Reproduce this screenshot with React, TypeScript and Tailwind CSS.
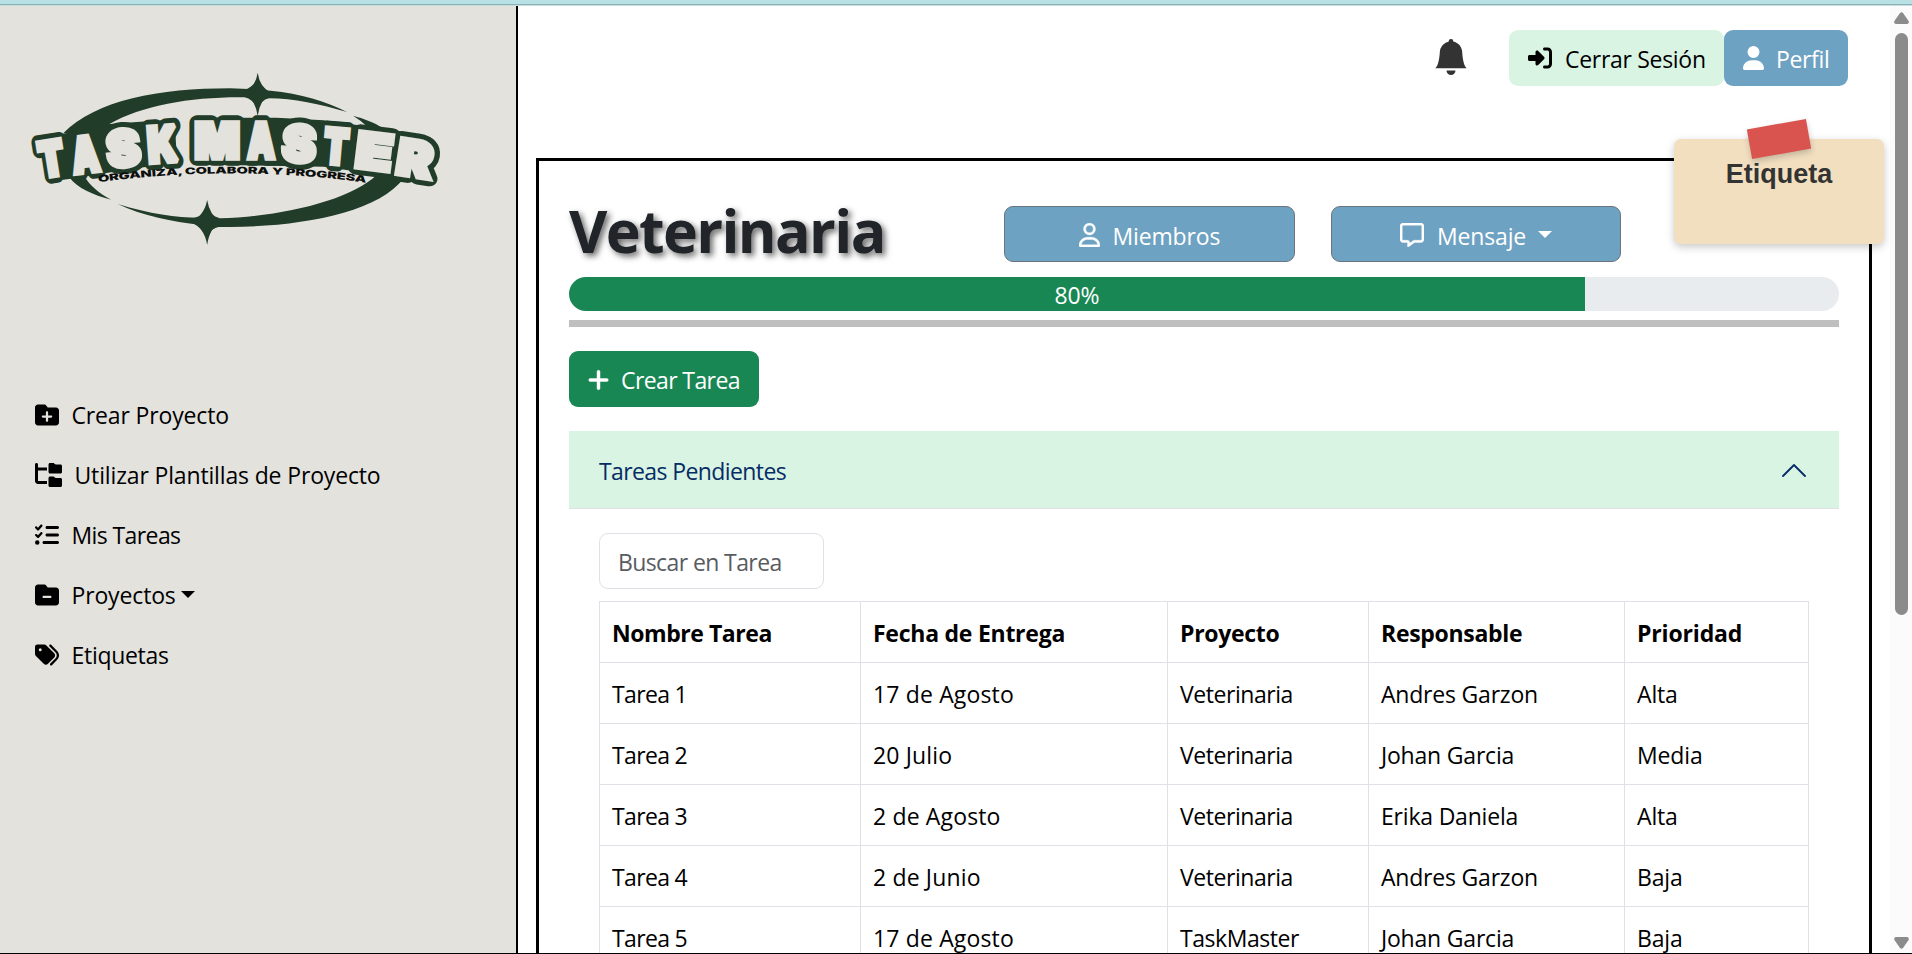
import type { ReactNode } from "react";
import {
  FaFolderMinus,
  FaFolderPlus,
  FaFolderTree,
  FaListCheck,
  FaPlus,
  FaRegMessage,
  FaRegUser,
  FaRightToBracket,
  FaTags,
  FaUser,
} from "react-icons/fa6";
import { BsBellFill } from "react-icons/bs";

type Letter = { ch: string; x: number; y: number; w: number; h: number; r: number };

const letters: Letter[] = [
  { ch: "T", x: 156, y: 325, w: 86, h: 122, r: -9 },
  { ch: "A", x: 258, y: 313, w: 92, h: 124, r: -7 },
  { ch: "S", x: 371, y: 294, w: 112, h: 126, r: -6 },
  { ch: "K", x: 488, y: 282, w: 100, h: 124, r: -4 },
  { ch: "M", x: 652, y: 273, w: 146, h: 122, r: 0 },
  { ch: "A", x: 783, y: 273, w: 92, h: 122, r: 0 },
  { ch: "S", x: 897, y: 281, w: 112, h: 126, r: 3 },
  { ch: "T", x: 1008, y: 289, w: 84, h: 122, r: 5 },
  { ch: "E", x: 1122, y: 304, w: 120, h: 124, r: 7 },
  { ch: "R", x: 1243, y: 326, w: 118, h: 124, r: 9 },
];

function LogoLetters({ className, strokeWidth }: { className: string; strokeWidth: number }) {
  return (
    <g className={className} strokeWidth={strokeWidth}>
      {letters.map((l, i) => (
        <text
          key={i}
          transform={`translate(${l.x} ${l.y}) rotate(${l.r})`}
          x={-(l.w - 12) / 2}
          y={(l.h - 18) / 2}
          fontSize={(l.h - 18) / 0.727}
          textLength={l.w - 12}
          lengthAdjust="spacingAndGlyphs"
        >
          {l.ch}
        </text>
      ))}
    </g>
  );
}

function Logo() {
  return (
    <svg viewBox="3 0 1554 660" preserveAspectRatio="none" className="h-[220px] w-[520px] shrink-0 font-['Inter',sans-serif] font-black">
      <g fill="#223c2a">
        <path d="M192 250C290 150 480 115 690 115L745 117L812 122C900 130 980 155 1040 186C960 163 880 145 806 145L735 142C580 140 430 165 330 222L300 262Z" />
        <path d="M1058 197C1090 206 1120 216 1150 236L1098 228Q1080 210 1058 197Z" />
        <path d="M1210 385C1130 490 900 530 690 531L650 531L600 524C520 516 430 498 355 462C450 492 530 503 600 503L660 505C850 500 1050 450 1128 376Z" />
        <path d="M210 382C235 415 280 435 335 449C300 430 270 405 256 380Z" />
        <path d="M773 68Q780 112 812 130Q780 148 773 198Q766 148 733 130Q766 112 773 68Z" />
        <path d="M622 450Q630 497 662 516Q630 532 622 585Q614 532 572 517Q614 497 622 450Z" />
        <path d="M773 85Q784 110 806 124V145Q784 150 773 178Q762 150 735 142V120Q762 108 773 85Z" />
        <path d="M622 478Q632 496 658 504V530Q634 534 622 560Q610 534 585 522V503Q612 496 622 478Z" />
        <path d="M160 258L260 238L330 222L525 208L532 338L400 356L215 386L170 392Z" />
        <path d="M580 204L830 203L970 211L1190 242L1290 262L1285 385L1185 381L970 350L580 343Z" />
      </g>
      <LogoLetters className="fill-[#223c2a] stroke-[#223c2a] [stroke-linejoin:round]" strokeWidth={46} />
      <LogoLetters className="fill-[#e3e2dd] stroke-[#e3e2dd] [stroke-linejoin:miter] [stroke-miterlimit:2]" strokeWidth={16} />
      <path id="tagline" d="M297 397Q700 342 1110 400" fill="none" />
      <text fontSize="28" textLength="802" lengthAdjust="spacingAndGlyphs" fill="#0d0f0d">
        <textPath href="#tagline" textLength="802" lengthAdjust="spacingAndGlyphs">
          ORGANIZA, COLABORA Y PROGRESA
        </textPath>
      </text>
    </svg>
  );
}

function Caret() {
  return (
    <svg viewBox="0 0 14 7" className="h-[7px] w-[14px] fill-current">
      <path d="M0 0H14L7 7Z" />
    </svg>
  );
}

function NavItem({ icon, children }: { icon: ReactNode; children: ReactNode }) {
  return (
    <li className="flex h-[60px] items-center pl-[35px]">
      {icon}
      <span className="ml-[12.5px] pb-px">{children}</span>
    </li>
  );
}

function Sidebar() {
  return (
    <aside className="flex w-[518px] shrink-0 flex-col border-r-2 border-black bg-[#e3e2dd] pt-[44px] text-black">
      <Logo />
      <ul className="mt-[115px]">
        <NavItem icon={<FaFolderPlus className="size-6" />}>Crear Proyecto</NavItem>
        <NavItem icon={<FaFolderTree className="h-6 w-[27px]" />}>Utilizar Plantillas de Proyecto</NavItem>
        <NavItem icon={<FaListCheck className="size-6" />}>
          <span className="tracking-[-0.6px]">Mis Tareas</span>
        </NavItem>
        <NavItem icon={<FaFolderMinus className="size-6" />}>
          <span className="flex items-center gap-[5px]">
            Proyectos <Caret />
          </span>
        </NavItem>
        <NavItem icon={<FaTags className="size-6" />}>
          <span className="tracking-[-0.3px]">Etiquetas</span>
        </NavItem>
      </ul>
    </aside>
  );
}

function TopBar() {
  return (
    <header className="flex h-14 items-center pl-[915px] text-black">
      <BsBellFill className="mb-[3px] size-9 text-[#333333]" />
      <button className="ml-[40px] flex h-14 w-[215px] items-center rounded-[9px] bg-[#daf4e3] pl-[19px]">
        <FaRightToBracket className="size-6" />
        <span className="ml-[13px] pt-px tracking-[-0.3px]">Cerrar Sesión</span>
      </button>
      <button className="flex h-14 w-[124px] items-center rounded-[9px] bg-[#6ea2c2] pl-[19px] text-white">
        <FaUser className="h-6 w-[21px]" />
        <span className="ml-[12px] pt-px tracking-[-0.35px]">Perfil</span>
      </button>
    </header>
  );
}

function Note() {
  return (
    <div className="absolute top-[139px] left-[1674px] h-[105px] w-[210px] rounded-[7px] bg-[#f2dfc0] pt-[20px] text-center font-['Liberation_Sans',Arial,sans-serif] text-[27px] leading-[30px] font-bold tracking-normal text-[#333333] shadow-[0_3px_8px_rgba(0,0,0,0.22)]">
      <div className="absolute top-[-15px] left-[75px] h-[30px] w-[60px] -rotate-10 bg-[#d9534f] shadow-[0_3px_6px_rgba(0,0,0,0.2)]" />
      <span className="relative">Etiqueta</span>
    </div>
  );
}

const columns = [
  { label: "Nombre Tarea", tracking: "tracking-[-0.45px]" },
  { label: "Fecha de Entrega", tracking: "tracking-[-0.25px]" },
  { label: "Proyecto", tracking: "tracking-[-0.3px]" },
  { label: "Responsable", tracking: "tracking-[-0.3px]" },
  { label: "Prioridad", tracking: "tracking-[-0.15px]" },
];

const cellTracking = [
  "tracking-[-0.65px]",
  "tracking-[0.15px]",
  "tracking-[-0.45px]",
  "tracking-[-0.2px]",
  "tracking-[-0.15px]",
];

const tasks = [
  ["Tarea 1", "17 de Agosto", "Veterinaria", "Andres Garzon", "Alta"],
  ["Tarea 2", "20 Julio", "Veterinaria", "Johan Garcia", "Media"],
  ["Tarea 3", "2 de Agosto", "Veterinaria", "Erika Daniela", "Alta"],
  ["Tarea 4", "2 de Junio", "Veterinaria", "Andres Garzon", "Baja"],
  ["Tarea 5", "17 de Agosto", "TaskMaster", "Johan Garcia", "Baja"],
];

function TaskTable() {
  return (
    <table className="mt-3 w-[1210px] table-fixed border-collapse border border-[#dee2e6] text-left leading-9 text-black">
      <colgroup>
        <col className="w-[261px]" />
        <col className="w-[307px]" />
        <col className="w-[201px]" />
        <col className="w-[256px]" />
        <col className="w-[184px]" />
      </colgroup>
      <thead>
        <tr>
          {columns.map((c) => (
            <th key={c.label} className={`h-[61px] border border-[#dee2e6] pt-px pb-0 pl-3 font-bold ${c.tracking}`}>
              {c.label}
            </th>
          ))}
        </tr>
      </thead>
      <tbody>
        {tasks.map((row) => (
          <tr key={row[0]}>
            {row.map((cell, i) => (
              <td key={i} className={`h-[61px] border border-[#dee2e6] pt-px pb-0 pl-3 ${cellTracking[i]}`}>
                {cell}
              </td>
            ))}
          </tr>
        ))}
      </tbody>
    </table>
  );
}

function ProjectPanel() {
  const progress = 80;
  return (
    <section className="mt-[72px] ml-[18px] min-h-[900px] w-[1336px] border-[3px] border-black bg-white px-[30px] pt-[45px]">
      <div className="flex h-14">
        <h1 className="-mt-[14px] w-[435px] text-[59px] leading-[76px] font-bold tracking-[-1.6px] text-[#212529] [text-shadow:3px_3px_6px_rgba(0,0,0,0.6)]">
          Veterinaria
        </h1>
        <button className="flex h-14 w-[291px] items-center rounded-[9px] border border-[#6c757d] bg-[#6ea2c2] pl-[74px] text-white">
          <FaRegUser className="mt-[2px] h-6 w-[21px] stroke-current stroke-[8]" />
          <span className="ml-[12.5px] pt-[3px]">Miembros</span>
        </button>
        <button className="ml-9 flex h-14 w-[290px] items-center rounded-[9px] border border-[#6c757d] bg-[#6ea2c2] pl-[68px] text-white">
          <FaRegMessage className="mt-[2px] size-6 stroke-current stroke-[8]" />
          <span className="mr-[12px] ml-[13px] pt-[3px]">Mensaje</span>
          <Caret />
        </button>
      </div>

      <div className="mt-[15px] flex h-[34px] w-[1270px] overflow-hidden rounded-full bg-[#e9ecef]">
        <div className="flex items-center justify-center bg-[#198754] pt-[2px] text-white" style={{ width: `${progress}%` }}>
          {progress}%
        </div>
      </div>
      <hr className="mt-[9px] h-[7px] border-0 bg-[#bfbfbf]" />

      <button className="mt-6 flex h-14 w-[190px] items-center rounded-[9px] bg-[#198754] pl-[19px] text-white">
        <FaPlus className="mt-px h-6 w-[21px] stroke-current stroke-[10]" />
        <span className="ml-[12px] pt-[2px] tracking-[-0.6px]">Crear Tarea</span>
      </button>

      <div className="mt-6 flex h-[78px] items-center justify-between border-b border-[#dee2e6] bg-[#daf4e3] pr-[33px] pl-[30px] text-[#052c65]">
        <span className="pt-[2px] tracking-[-0.6px]">Tareas Pendientes</span>
        <svg viewBox="0 0 24 14" className="h-[14px] w-6 fill-none stroke-current stroke-[1.8]">
          <path d="M1 13L12 2L23 13" strokeLinecap="round" strokeLinejoin="round" />
        </svg>
      </div>

      <div className="px-[30px] pt-6">
        <input
          placeholder="Buscar en Tarea"
          className="block h-14 w-[225px] rounded-[9px] border border-[#dee2e6] pt-px pl-[18px] tracking-[-0.6px] placeholder:text-[#595c5f]"
        />
        <TaskTable />
      </div>
    </section>
  );
}

function Scrollbar() {
  return (
    <div className="flex w-[22px] shrink-0 flex-col items-center bg-[#fbfbfb] pt-[6px] pb-1 text-[#8b8b8b]">
      <svg viewBox="0 0 15 12" className="h-3 w-[15px] fill-current">
        <path d="M6 1Q7.5-.6 9 1L14.6 9Q15.4 12 13 12H2Q-.4 12 .4 9Z" />
      </svg>
      <div className="mt-[9px] h-[582px] w-[13px] rounded-full bg-[#8b8b8b]" />
      <svg viewBox="0 0 15 12" className="mt-auto h-3 w-[15px] fill-current">
        <path d="M6 11Q7.5 12.6 9 11L14.6 3Q15.4 0 13 0H2Q-.4 0 .4 3Z" />
      </svg>
    </div>
  );
}

export default function App() {
  return (
    <div className="relative flex h-[954px] w-[1912px] flex-col overflow-hidden border-b border-black bg-white font-['Open_Sans','Noto_Sans',sans-serif] text-[23px] leading-9 tracking-[-0.15px]">
      <div className="h-[6px] shrink-0 border-b border-[#c2dfe1] bg-[#b7e1e4]">
        <div className="h-[5px] border-b border-[#8eb0b3]" />
      </div>
      <div className="flex min-h-0 flex-1">
        <Sidebar />
        <main className="min-w-0 flex-1 overflow-hidden pt-6">
          <TopBar />
          <ProjectPanel />
        </main>
        <Scrollbar />
      </div>
      <Note />
    </div>
  );
}
